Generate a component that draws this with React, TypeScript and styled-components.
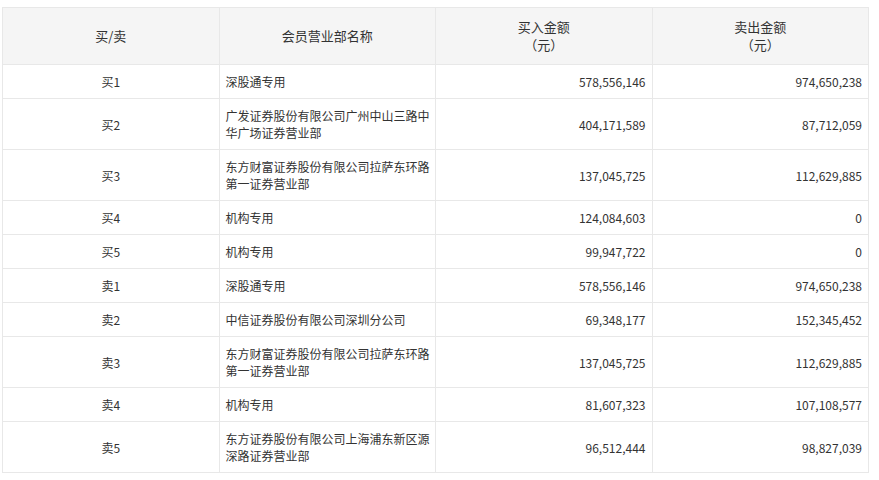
import React from 'react'
import styled, { createGlobalStyle } from 'styled-components'

const GlobalStyle = createGlobalStyle`
  html, body {
    margin: 0;
    padding: 0;
    background: #fff;
  }
  body {
    font-family: "Noto Sans CJK SC", "Noto Sans", sans-serif;
    color: #333;
  }
`

const Page = styled.div`
  padding: 7px 10px 0 2px;
`

const Table = styled.table`
  width: 867px;
  border-collapse: collapse;
  table-layout: fixed;
  font-size: 12px;
`

const HeadCell = styled.th`
  background: #f5f5f5;
  border: 1px solid #e8e8e8;
  font-weight: normal;
  font-size: 13px;
  line-height: 18px;
  padding: 10px 6px;
  text-align: center;
  color: #333;
`

const Cell = styled.td<{ $align: 'left' | 'center' | 'right' }>`
  border: 1px solid #e8e8e8;
  padding: 8px ${p => (p.$align === 'left' ? '2px' : '6px')} 8px 6px;
  line-height: 17px;
  text-align: ${p => p.$align};
  vertical-align: middle;
  color: #333;
`

type Row = { side: string; name: string; buy: string; sell: string }

const rows: Row[] = [
  { side: '买1', name: '深股通专用', buy: '578,556,146', sell: '974,650,238' },
  { side: '买2', name: '广发证券股份有限公司广州中山三路中华广场证券营业部', buy: '404,171,589', sell: '87,712,059' },
  { side: '买3', name: '东方财富证券股份有限公司拉萨东环路第一证券营业部', buy: '137,045,725', sell: '112,629,885' },
  { side: '买4', name: '机构专用', buy: '124,084,603', sell: '0' },
  { side: '买5', name: '机构专用', buy: '99,947,722', sell: '0' },
  { side: '卖1', name: '深股通专用', buy: '578,556,146', sell: '974,650,238' },
  { side: '卖2', name: '中信证券股份有限公司深圳分公司', buy: '69,348,177', sell: '152,345,452' },
  { side: '卖3', name: '东方财富证券股份有限公司拉萨东环路第一证券营业部', buy: '137,045,725', sell: '112,629,885' },
  { side: '卖4', name: '机构专用', buy: '81,607,323', sell: '107,108,577' },
  { side: '卖5', name: '东方证券股份有限公司上海浦东新区源深路证券营业部', buy: '96,512,444', sell: '98,827,039' },
]

export default function App() {
  return (
    <Page>
      <GlobalStyle />
      <Table>
        <thead>
          <tr>
            <HeadCell>买/卖</HeadCell>
            <HeadCell>会员营业部名称</HeadCell>
            <HeadCell>买入金额<br />（元）</HeadCell>
            <HeadCell>卖出金额<br />（元）</HeadCell>
          </tr>
        </thead>
        <tbody>
          {rows.map(r => (
            <tr key={r.side}>
              <Cell $align="center">{r.side}</Cell>
              <Cell $align="left">{r.name}</Cell>
              <Cell $align="right">{r.buy}</Cell>
              <Cell $align="right">{r.sell}</Cell>
            </tr>
          ))}
        </tbody>
      </Table>
    </Page>
  )
}
